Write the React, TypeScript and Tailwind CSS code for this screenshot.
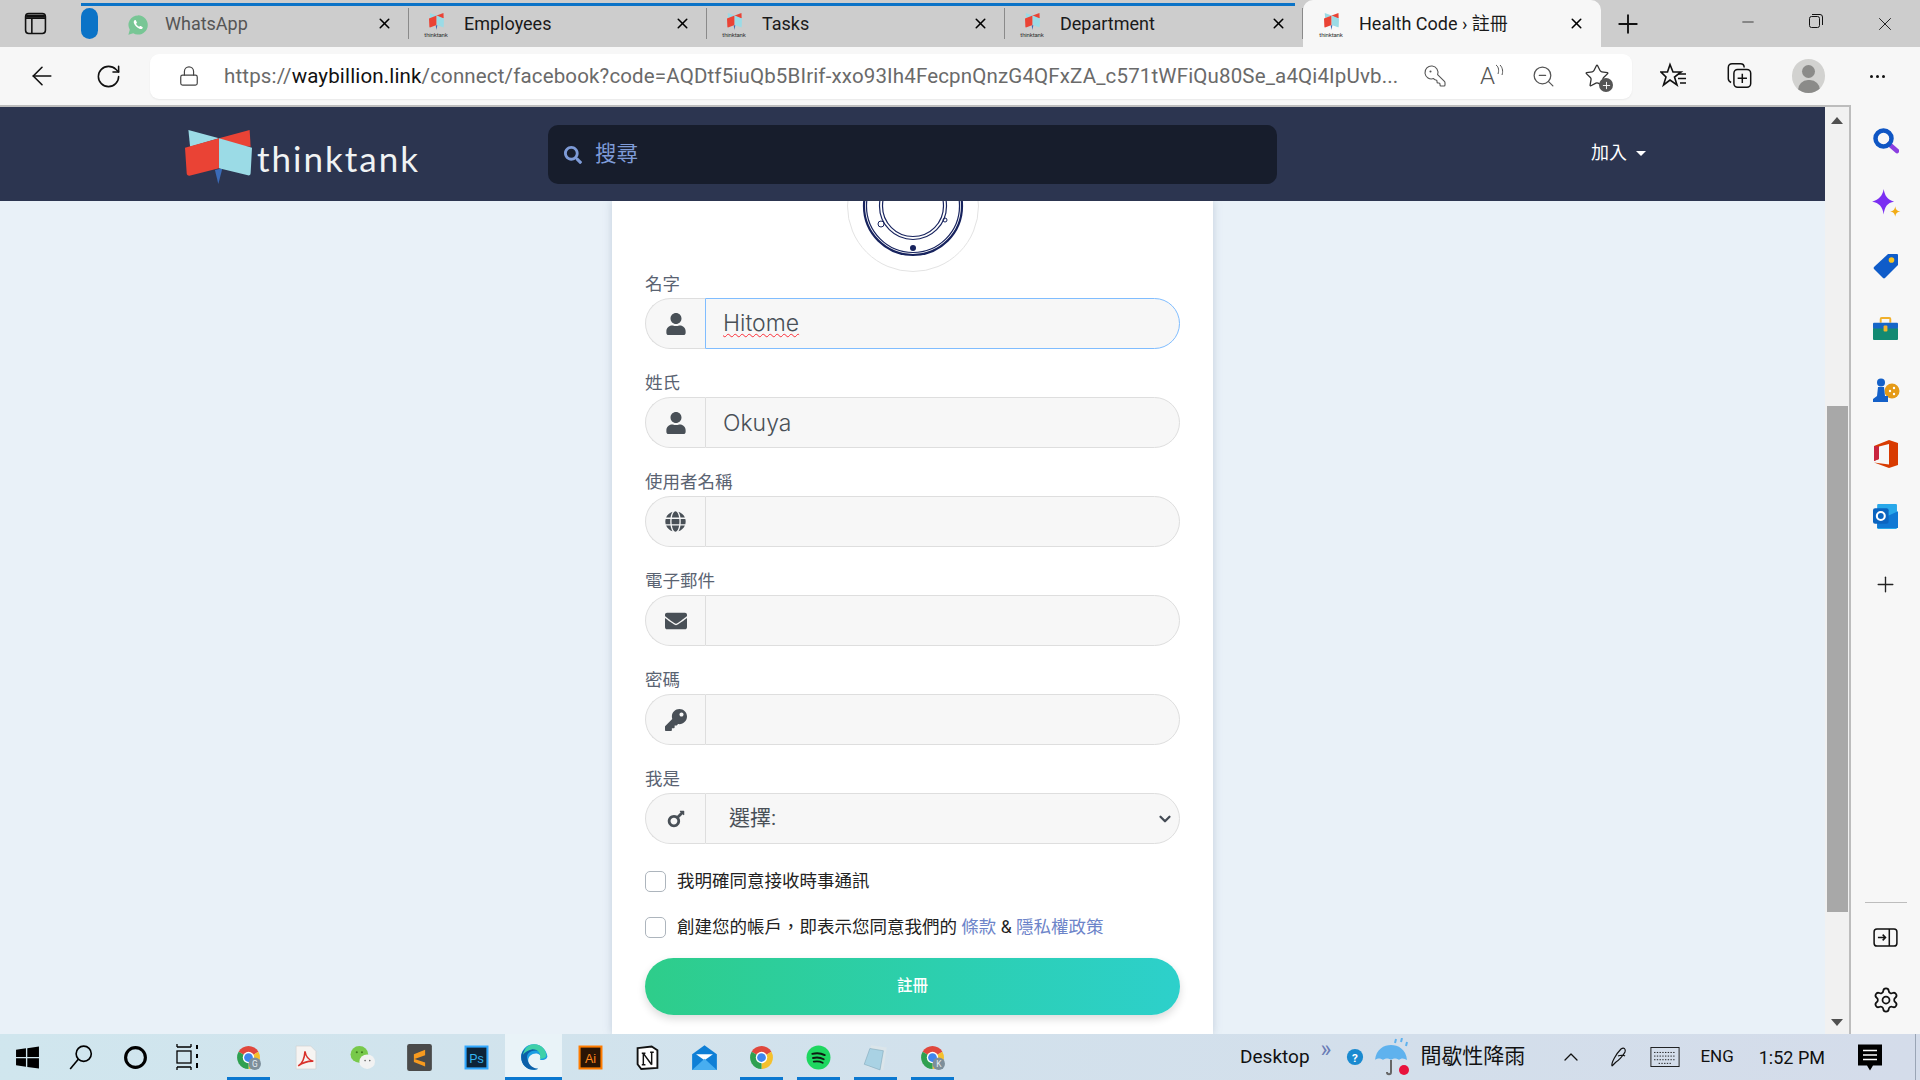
import type { ReactNode } from "react";
import { ArrowLeft, RotateCw, X, Plus, Minus, ChevronDown, ChevronUp, Star, Settings, KeyRound, ZoomOut, Lock } from "lucide-react";
import { FaUser, FaGlobe, FaEnvelope, FaKey, FaMars, FaSearch } from "react-icons/fa";

const LogoMark = ({ className }: { className: string }) => (
  <svg viewBox="45 45 197 162" preserveAspectRatio="none" className={className}>
    <path d="M55 45 L145 70 L60 95 Z" fill="#9bdbe6" />
    <path d="M145 70 L235 45 L238 95 L190 90 Z" fill="#ea4335" />
    <path d="M133 165 L155 160 L143 207 Z" fill="#3a6bb8" />
    <path d="M45 98 L145 70 L145 160 L58 182 Q50 182 50 175 Z" fill="#ea4335" />
    <path d="M145 70 L242 98 L238 175 Q238 183 230 181 L145 160 Z" fill="#9bdbe6" />
  </svg>
);

const Favicon = () => (
  <div className="flex w-[24px] flex-col items-center">
    <LogoMark className="h-[17px] w-[15px]" />
    <span className="mt-[1px] text-[6px] leading-[7px] tracking-tight text-[#333]">thinktank</span>
  </div>
);

const WhatsAppIcon = () => (
  <svg viewBox="0 0 24 24" className="h-[24px] w-[24px]">
    <path d="M12 1.5a10.5 10.5 0 0 0-9 15.8L1.5 22.5l5.4-1.4A10.5 10.5 0 1 0 12 1.5z" fill="#78c695" />
    <path d="M8.3 6.8c-.9.8-1.2 2-.7 3.4 1 2.6 3.4 5 6 6 1.4.5 2.6.2 3.4-.7.4-.5.3-1-.2-1.4l-1.8-1c-.4-.2-.8-.2-1.1.2l-.6.7c-1.500-.6-2.800-1.900-3.500-3.400l.7-.6c.4-.3.4-.7.2-1.100l-1-1.800c-.3-.5-.9-.6-1.400-.3z" fill="#fff" />
  </svg>
);

const Tab = ({ icon, title, active, dim }: { icon: ReactNode; title: string; active?: boolean; dim?: boolean }) => (
  <div className={active ? "flex h-[47px] w-[298px] items-center rounded-t-[10px] bg-[#f7f7f7] pl-[17px]" : "flex h-[47px] w-[298px] items-center pl-[16px]"}>
    <div className="flex w-[22px] justify-center pt-[3px]">{icon}</div>
    <span className={dim ? "ml-[16px] flex-1 text-[18px] text-[#555]" : "ml-[17px] flex-1 text-[18px] text-[#1a1a1a]"}>{title}</span>
    <X size={17} strokeWidth={2.2} className="text-black" />
    <div className="w-[15px]" />
    {active ? <div className="w-px" /> : <div className="h-[31px] w-px bg-[#8a8a8a]" />}
  </div>
);

const Chrome = ({ badge }: { badge?: string }) => (
  <svg viewBox="0 0 24 24" className="h-[25px] w-[25px]">
    <path d="M2.500 6.500A11 11 0 0 1 21.500 6.500L12 12Z" fill="#e0483d" />
    <path d="M21.500 6.500A11 11 0 0 1 12 23L12 12Z" fill="#f5c02c" />
    <path d="M12 23A11 11 0 0 1 2.500 6.500L12 12Z" fill="#2fa050" />
    <circle cx="12" cy="12" r="5.500" fill="#fff" />
    <circle cx="12" cy="12" r="4.200" fill="#3f86ee" />
    {badge && (
      <>
        <circle cx="18" cy="18" r="6" fill="#7d8f9b" />
        <text x="18" y="21" textAnchor="middle" fontSize="8" fill="#e6edf2">{badge}</text>
      </>
    )}
  </svg>
);

const Windows = () => (
  <svg viewBox="0 0 24 24" className="h-[25px] w-[25px]" fill="#000">
    <path d="M1 4.500 10.500 3.200V11.400H1ZM11.800 3 23 1.400V11.400H11.800ZM1 12.700H10.500V20.800L1 19.500ZM11.800 12.700H23V22.600L11.800 21Z" />
  </svg>
);

const SearchGlass = () => (
  <svg viewBox="0 0 24 24" className="h-[26px] w-[26px]" fill="none" stroke="#000" strokeWidth="1.500">
    <circle cx="14.500" cy="9" r="7" />
    <path d="M9.500 14 2 23" />
  </svg>
);

const Cortana = () => (
  <svg viewBox="0 0 24 24" className="h-[25px] w-[25px]" fill="none" stroke="#000" strokeWidth="3">
    <circle cx="12" cy="12" r="9.500" />
  </svg>
);

const TaskView = () => (
  <svg viewBox="0 0 26 26" className="h-[26px] w-[26px]" fill="none" stroke="#000" strokeWidth="1.300">
    <path d="M1 3H15M1 23H15M15 0V3M1 0V3M1 23V26M15 23V26" />
    <rect x="1" y="7" width="14" height="12" />
    <path d="M21 1V5M21 10V14M21 19V24" strokeWidth="2" />
  </svg>
);

const Acrobat = () => (
  <svg viewBox="0 0 24 24" className="h-[25px] w-[25px]">
    <path d="M3 1H17L22 6V23H3Z" fill="#f6f4f2" stroke="#cfcfcf" strokeWidth=".600" />
    <path d="M5 20c3-1.500 6-6.500 6.500-14 .8 5 3.500 8.500 8 9.500-4.500-.2-9.500 1-14.500 4.500z" fill="none" stroke="#d8312b" strokeWidth="1.500" />
  </svg>
);

const WeChat = () => (
  <svg viewBox="0 0 26 26" className="h-[27px] w-[27px]">
    <ellipse cx="10" cy="10" rx="8.500" ry="8" fill="#78c94b" />
    <ellipse cx="17.500" cy="17" rx="7.500" ry="7" fill="#f2f2f2" />
    <circle cx="7.500" cy="8" r="1" fill="#3f7a20" />
    <circle cx="12.500" cy="8" r="1" fill="#3f7a20" />
    <circle cx="15.500" cy="16" r=".8" fill="#666" />
    <circle cx="20" cy="16" r=".8" fill="#666" />
  </svg>
);

const Sublime = () => (
  <svg viewBox="0 0 24 24" className="h-[27px] w-[27px]">
    <rect x="1" y="0" width="22" height="24" rx="2" fill="#4a4a4a" />
    <path d="M17 5 7 9v4l10 3.500V20L7 16v-2.500L17 10Z" fill="#f79a1f" />
  </svg>
);

const BoxIcon = ({ bg, fg, border, label }: { bg: string; fg: string; border: string; label: string }) => (
  <svg viewBox="0 0 24 24" className="h-[25px] w-[25px]">
    <rect x="1.500" y="1.500" width="21" height="21" fill={bg} stroke={border} strokeWidth="2" />
    <text x="12" y="17" textAnchor="middle" fontSize="12" fontFamily="Liberation Sans" fill={fg}>{label}</text>
  </svg>
);

const Edge = () => (
  <svg viewBox="0 0 24 24" className="h-[28px] w-[28px]">
    <path d="M12 1C5 1 1 6.500 1 12c0 6.500 5 11 10.500 11 1.500 0 3-.4 4-1-3.500.7-8.500-1.500-8.500-7 0-3.500 3-6 6.500-6 3 0 4.500 2 4.500 3.500 0 1.200-1 2-1 2s5.500 1 6.500-3C23 6.500 18.500 1 12 1z" fill="#1b9de2" />
    <path d="M1 12c0-5 4-8.500 9-8.500 5.500 0 8 3.500 9 6-1.500-2.500-4-3-5.500-3C8 6.500 4 10 7 16c1.300 3.500 5 6 8.500 6-1 .6-2.500 1-4 1C6 23 1 18.500 1 12z" fill="#0c5fa8" />
    <path d="M12 1c6.500 0 11 5.500 10.500 10-.4 1.700-2.500 2.800-5.500 2.500 1.500-4-1.500-8.500-7-8C7 5.800 4 8 2.500 10 3.500 5 7 1 12 1z" fill="#3fd0a8" />
  </svg>
);

const Notion = () => (
  <svg viewBox="0 0 24 24" className="h-[25px] w-[25px]">
    <path d="M2.500 3 16 1.500 21.500 5V22L6 23 2.500 18.500Z" fill="#fff" stroke="#111" strokeWidth="1.800" />
    <path d="M8 8V19M8 8 16 19M16 7V19M6.500 8H10M14.500 7H18M6.500 19H10" stroke="#111" strokeWidth="1.400" fill="none" />
  </svg>
);

const Mail = () => (
  <svg viewBox="0 0 24 24" className="h-[27px] w-[27px]">
    <path d="M1 9 12 1 23 9V23H1Z" fill="#0f7fd6" />
    <path d="M4.500 9H19.500L12 14.500Z" fill="#fff" />
    <path d="M1 23 12 13 23 23Z" fill="#48aef0" />
  </svg>
);

const Spotify = () => (
  <svg viewBox="0 0 24 24" className="h-[25px] w-[25px]" fill="none">
    <circle cx="12" cy="12" r="11.500" fill="#1ed760" />
    <path d="M6 8.500c4-1 8.500-.7 12 1.200M6.700 12.500c3.500-.8 7.300-.5 10.300 1.200M7.500 16c3-.6 6-.3 8.500 1" stroke="#0d1b12" strokeWidth="1.800" strokeLinecap="round" />
  </svg>
);

const Notepad = () => (
  <svg viewBox="0 0 24 24" className="h-[27px] w-[27px]">
    <path d="M4 20 8 1 22 3 19 23Z" fill="#dbe5ea" />
    <path d="M2 18 7 4 19 6 16 23Z" fill="#a9d2e4" stroke="#7fa5b7" strokeWidth=".500" />
  </svg>
);

const Cell = ({ children, line, active }: { children: ReactNode; line?: boolean; active?: boolean }) => (
  <div className={active ? "relative flex h-full w-[57px] items-center justify-center bg-[#e9f3f8]" : "relative flex h-full w-[57px] items-center justify-center"}>
    {children}
    {active && <div className="absolute inset-x-0 bottom-0 h-[3px] bg-[#0b78d0]" />}
    {line && <div className="absolute bottom-0 left-[7px] h-[3px] w-[43px] bg-[#0b78d0]" />}
  </div>
);

const Taskbar = () => (
  <footer className="flex h-[46px] shrink-0 items-center bg-linear-to-r from-[#d0e6ee] to-[#d4dcea]">
    <div className="flex h-full w-[54px] items-center justify-center"><Windows /></div>
    <div className="flex h-full w-[54px] items-center justify-center"><SearchGlass /></div>
    <div className="flex h-full w-[54px] items-center justify-center"><Cortana /></div>
    <div className="flex h-full w-[54px] items-center justify-center"><TaskView /></div>
    <div className="ml-[4px] flex h-full">
      <Cell line><Chrome badge="G" /></Cell>
      <Cell><Acrobat /></Cell>
      <Cell><WeChat /></Cell>
      <Cell><Sublime /></Cell>
      <Cell><BoxIcon bg="#0d2438" fg="#35b4f0" border="#31a8ff" label="Ps" /></Cell>
      <Cell active><Edge /></Cell>
      <Cell><BoxIcon bg="#2a1505" fg="#ff8a1f" border="#ff7c00" label="Ai" /></Cell>
      <Cell><Notion /></Cell>
      <Cell><Mail /></Cell>
      <Cell line><Chrome /></Cell>
      <Cell line><Spotify /></Cell>
      <Cell line><Notepad /></Cell>
      <Cell line><Chrome badge="K" /></Cell>
    </div>
    <div className="ml-auto flex h-full items-center text-[18px] text-[#111]">
      <span className="text-[19px]">Desktop</span>
      <span className="mb-[16px] ml-[11px] text-[23px] leading-none text-[#6a7cb5]">»</span>
      <svg viewBox="0 0 20 20" className="ml-[15px] h-[18px] w-[18px]">
        <circle cx="10" cy="10" r="9" fill="#1a8ad0" />
        <text x="10" y="15" textAnchor="middle" fontSize="13" fontWeight="700" fill="#fff">?</text>
      </svg>
      <svg viewBox="0 0 36 38" className="ml-[11px] h-[38px] w-[36px]">
        <path d="M0 22C1 11 9 7 16 7s15 4 16 15c-3-2-6-2-8 0-2-2-6-2-8 0-2-2-6-2-8 0-2-2-6-2-8 0z" fill="#5fb2ee" />
        <path d="M16 22V34c0 3-4 3-4 0" fill="none" stroke="#666" strokeWidth="2" />
        <path d="M21 1l-1 4M27 0l-1 4M32 4l-1 4" stroke="#5fb2ee" strokeWidth="2" />
        <circle cx="29" cy="32" r="5" fill="#e8123c" />
      </svg>
      <span className="ml-[9px] text-[21px]">間歇性降雨</span>
      <ChevronUp size={24} strokeWidth={1.3} className="ml-[34px]" />
      <svg viewBox="0 0 20 22" className="ml-[26px] h-[22px] w-[20px]" fill="none" stroke="#111" strokeWidth="1.200">
        <path d="M3 20C2 17 7 8 12 3c3-2 5 0 4 3-2 4-7 9-9 10M3 20l4-4M9 10c2-1 6-1 7 0" />
      </svg>
      <svg viewBox="0 0 32 22" className="ml-[20px] h-[20px] w-[32px]" fill="none" stroke="#111" strokeWidth="1">
        <rect x=".500" y=".500" width="31" height="21" />
        <path d="M4 6H28M4 10H28M4 14H28M9 18H23" strokeDasharray="1.500 1.500" />
      </svg>
      <span className="ml-[19px] text-[17px]">ENG</span>
      <span className="ml-[25px] text-[18px]">1:52 PM</span>
      <svg viewBox="0 0 24 26" className="ml-[33px] h-[27px] w-[24px]">
        <path d="M0 0H24V21H15L12 26 9 21H0Z" fill="#000" />
        <path d="M5 6H19M5 10.500H19M5 15H19" stroke="#fff" strokeWidth="1.300" />
      </svg>
      <div className="ml-[33px] h-full w-px bg-[#9aa5b5]" />
      <div className="w-[4px]" />
    </div>
  </footer>
);

const Field = ({ label, icon, children }: { label: string; icon: ReactNode; children: ReactNode }) => (
  <div className="flex h-[99px] flex-col">
    <label className="h-[32px] text-[17.5px] leading-[37px] text-[#5a6372]">{label}</label>
    {/* the input group: round cap with the icon, then the control */}
    <div className="flex h-[51px]">
      <div className="flex w-[60px] items-center justify-center rounded-l-full border-y border-l border-[#dedede] bg-[#f7f7f7] text-[#495057]">{icon}</div>
      {children}
    </div>
  </div>
);

const inputClass =
  "h-full min-w-0 flex-1 rounded-r-full border border-[#dedede] bg-[#f7f7f7] pl-[17px] font-['Inter'] text-[23px] font-light text-[#495057] outline-none";

const Seal = () => (
  <svg viewBox="0 0 132 132" className="h-[132px] w-[132px]" fill="none">
    <circle cx="66" cy="66" r="65.500" fill="#fff" stroke="#e3e3e3" />
    <circle cx="66" cy="66" r="49" stroke="#17235e" strokeWidth="2.200" />
    <circle cx="66" cy="66" r="46.500" stroke="#17235e" strokeWidth="1.200" />
    <circle cx="66" cy="66" r="33.500" stroke="#17235e" strokeWidth="1.200" />
    <circle cx="66" cy="66" r="30.500" stroke="#17235e" strokeWidth="1.200" />
    <circle cx="66" cy="108" r="3" fill="#17235e" />
    <circle cx="34" cy="84" r="3" stroke="#17235e" />
    <circle cx="98" cy="80" r="2" stroke="#17235e" />
  </svg>
);

const Form = () => (
  <div className="mx-auto flex h-[833px] w-[601px] flex-col bg-white px-[33px] shadow-[0_0_8px_rgba(120,140,165,0.35)]">
    <div className="-mt-[61px] flex justify-center"><Seal /></div>
    <div className="mt-[-6px]">
      <Field label="名字" icon={<FaUser size={22} />}>
        <div className="flex h-full min-w-0 flex-1 items-center rounded-r-full border border-[#80bdff] bg-[#f7f7f7] pl-[17px] font-['Inter'] text-[23px] font-light text-[#495057]">
          <span className="underline decoration-red-500 decoration-wavy decoration-1 underline-offset-2">Hitome</span>
        </div>
      </Field>
      <Field label="姓氏" icon={<FaUser size={22} />}>
        <input className={inputClass} defaultValue="Okuya" />
      </Field>
      <Field label="使用者名稱" icon={<FaGlobe size={21} />}>
        <input className={inputClass} />
      </Field>
      <Field label="電子郵件" icon={<FaEnvelope size={22} />}>
        <input className={inputClass} />
      </Field>
      <Field label="密碼" icon={<FaKey size={22} />}>
        <input className={inputClass} />
      </Field>
      <Field label="我是" icon={<FaMars size={22} />}>
        <div className="relative h-full min-w-0 flex-1">
          <select className="h-full w-full appearance-none rounded-r-full border border-[#dedede] bg-[#f7f7f7] pl-[23px] text-[21px] text-[#495057] outline-none">
            <option>選擇:</option>
          </select>
          <ChevronDown size={18} strokeWidth={3} className="absolute top-[17px] right-[6px] text-[#444b55]" />
        </div>
      </Field>
    </div>
    <div className="mt-[9px] flex h-[25px] items-center">
      <input type="checkbox" className="h-[21px] w-[21px] appearance-none rounded-[5px] border border-[#adb5bd] bg-white" />
      <span className="ml-[11px] text-[17.5px] text-[#222]">我明確同意接收時事通訊</span>
    </div>
    <div className="mt-[21px] flex h-[25px] items-center">
      <input type="checkbox" className="h-[21px] w-[21px] appearance-none rounded-[5px] border border-[#adb5bd] bg-white" />
      <span className="ml-[11px] text-[17.5px] text-[#222]">
        創建您的帳戶{"\uFF0C"}即表示您同意我們的 <a className="text-[#6d84c9]">條款</a> &amp; <a className="text-[#6d84c9]">隱私權政策</a>
      </span>
    </div>
    <button className="mt-[18px] h-[57px] w-full rounded-full bg-linear-to-r from-[#2ecd8a] to-[#2dd0cb] text-[15.500px] font-medium text-white shadow-[0_4px_8px_rgba(0,0,0,0.14)]">
      註冊
    </button>
  </div>
);

const SideIcon = ({ children }: { children: ReactNode }) => (
  <div className="flex h-[62.500px] w-full items-center justify-center">{children}</div>
);

const Sidebar = () => (
  <aside className="flex w-[69px] shrink-0 flex-col bg-[#f7f7f7] pt-[5px]">
    <SideIcon>
      <svg viewBox="0 0 26 26" className="h-[26px] w-[26px]" fill="none">
        <path d="M16 16 24 23" stroke="#8b3fe0" strokeWidth="4.500" strokeLinecap="round" />
        <circle cx="10.500" cy="10.500" r="8" stroke="#0f56c4" strokeWidth="4.500" />
      </svg>
    </SideIcon>
    <SideIcon>
      <svg viewBox="0 0 26 26" className="h-[30px] w-[30px]">
        <path d="M11 0c1 6 3 9 9 11-6 1-8 4-9 11-1-7-4-10-10-11 6-2 9-5 10-11z" fill="#7b2ff2" />
        <path d="M21 15c.5 3 1.500 4 4.500 4.500-3 .5-4 1.500-4.500 4.500-.5-3-1.500-4-4.500-4.500 3-.5 4-1.500 4.500-4.500z" fill="#f2ac14" />
      </svg>
    </SideIcon>
    <SideIcon>
      <svg viewBox="0 0 26 26" className="h-[26px] w-[26px]">
        <path d="M15 1H24a1 1 0 0 1 1 1V12L12 25a1.500 1.500 0 0 1-2 0L1 16a1.500 1.500 0 0 1 0-2Z" fill="#0f5cc9" />
        <circle cx="18.500" cy="7" r="2.800" fill="#f9c320" />
      </svg>
    </SideIcon>
    <SideIcon>
      <svg viewBox="0 0 28 26" className="h-[25px] w-[27px]" fill="none">
        <path d="M9 7V3a1 1 0 0 1 1-1h8a1 1 0 0 1 1 1v4" stroke="#f0b02c" strokeWidth="2" />
        <rect x="1" y="12" width="26" height="13" rx="1" fill="#128a72" />
        <rect x="1" y="7" width="26" height="6" rx="1" fill="#1566c8" />
        <rect x="12" y="10" width="4" height="6" rx="1" fill="#f5b52a" />
      </svg>
    </SideIcon>
    <SideIcon>
      <svg viewBox="0 0 28 26" className="h-[26px] w-[28px]">
        <circle cx="20" cy="13" r="7.500" fill="#e59a17" />
        <circle cx="18" cy="13" r="1.200" fill="#fff" />
        <circle cx="22" cy="10" r="1.200" fill="#fff" />
        <circle cx="22" cy="16" r="1.200" fill="#fff" />
        <circle cx="9" cy="4.500" r="4" fill="#1460c8" />
        <path d="M6 9h6l1 9h3v6H1v-3l4-3Z" fill="#1460c8" />
      </svg>
    </SideIcon>
    <SideIcon>
      <svg viewBox="0 0 24 28" className="h-[28px] w-[24px]">
        <path d="M15 0 24 3V25L15 28 0 22.500 15 24.500V4L5 6.500V19L0 21V6Z" fill="#d83b01" />
        <path d="M0 6 5 6.500V19L0 21Z" fill="#c9253f" />
      </svg>
    </SideIcon>
    <SideIcon>
      <svg viewBox="0 0 24 24" className="h-[25px] w-[25px]">
        <rect x="4" y="0" width="19" height="24" rx="1" fill="#28a8ea" />
        <path d="M13 12 24 7V23H4V18Z" fill="#0f78d4" />
        <rect x="0" y="4" width="15" height="15" rx="2" fill="#0a64c0" />
        <circle cx="7.500" cy="11.500" r="3.800" fill="none" stroke="#fff" strokeWidth="2" />
      </svg>
    </SideIcon>
    <div className="flex h-[67px] w-full items-center justify-center pt-[6px]">
      <Plus size={25} strokeWidth={1.300} className="text-[#222]" />
    </div>
    <div className="mt-auto flex flex-col items-center">
      <div className="h-px w-[42px] bg-[#bdbdbd]" />
      <div className="flex h-[69px] items-center justify-center">
        <svg viewBox="0 0 26 20" className="h-[19px] w-[25px]" fill="none" stroke="#111" strokeWidth="1.600">
          <rect x="1" y="1" width="24" height="18" rx="3" />
          <path d="M17 1V19M5 10H13M10 7l3 3-3 3" />
        </svg>
      </div>
      <div className="flex h-[62px] items-start justify-center pt-[14px]">
        <Settings size={28} strokeWidth={1.500} className="text-[#111]" />
      </div>
    </div>
  </aside>
);

const ScrollBar = () => (
  <div className="flex w-[26px] shrink-0 flex-col items-center border-r-2 border-[#bdbdbd] bg-[#f1f1f1]">
    <div className="mt-[10px] h-0 w-0 border-x-[6px] border-b-[7px] border-x-transparent border-b-[#505050]" />
    <div className="mt-[282px] h-[506px] w-[21px] bg-[#a8a8a8]" />
    <div className="mt-auto mb-[8px] h-0 w-0 border-x-[6px] border-t-[7px] border-x-transparent border-t-[#505050]" />
  </div>
);

export default function App() {
  return (
    <div className="flex h-screen w-screen flex-col overflow-hidden bg-[#f7f7f7] font-[family-name:'Roboto','Noto_Sans_CJK_TC',sans-serif]">
      {/* tab strip */}
      <div className="relative flex h-[47px] shrink-0 items-center bg-[#cdcdcd]">
        <div className="absolute top-[3px] left-[81px] h-[3px] w-[1214px] bg-[#0b73c7]" />
        <div className="flex w-[70px] justify-center">
          <svg viewBox="0 0 22 22" className="h-[23px] w-[23px]" fill="none" stroke="#111" strokeWidth="1.500">
            <rect x="1.500" y="1.500" width="19" height="19" rx="3" />
            <path d="M7.500 6V20.500M1.500 6H20.500" />
            <path d="M2 2.500H20V5.500H2Z" fill="#111" stroke="none" />
          </svg>
        </div>
        <div className="ml-[11px] h-[31px] w-[17px] rounded-full bg-[#0b73c7]" />
        <div className="ml-[13px] flex">
          <Tab icon={<WhatsAppIcon />} title="WhatsApp" dim />
          <Tab icon={<Favicon />} title="Employees" />
          <Tab icon={<Favicon />} title="Tasks" />
          <Tab icon={<Favicon />} title="Department" />
          <Tab icon={<Favicon />} title="Health Code › 註冊" active />
        </div>
        <Plus size={30} strokeWidth={1.500} className="ml-[12px] text-[#111]" />
        <div className="ml-auto flex">
          <div className="flex w-[68px] justify-center"><Minus size={18} strokeWidth={1} className="text-[#111]" /></div>
          <div className="flex w-[68px] justify-center">
            <svg viewBox="0 0 16 16" className="h-[16px] w-[16px]" fill="none" stroke="#111" strokeWidth="1">
              <rect x="1.500" y="3.500" width="10" height="11" rx="2" />
              <path d="M4 1.500H12a2.500 2.500 0 0 1 2.500 2.500V12" />
            </svg>
          </div>
          <div className="flex w-[70px] justify-center"><X size={22} strokeWidth={1} className="text-[#111]" /></div>
        </div>
      </div>

      {/* address bar */}
      <div className="flex h-[58px] shrink-0 items-center bg-[#f7f7f7]">
        <ArrowLeft size={30} strokeWidth={1.300} className="ml-[27px] text-[#111]" />
        <RotateCw size={27} strokeWidth={1.400} className="ml-[38px] text-[#111]" />
        <div className="ml-[28px] flex h-[45px] w-[1482px] items-center rounded-[9px] bg-white shadow-[0_1px_2px_rgba(0,0,0,0.06)]">
          <Lock size={22} strokeWidth={1.300} className="ml-[28px] text-[#444]" />
          <div className="ml-[24px] w-[1176px] overflow-hidden text-[20.500px] tracking-[0.15px] whitespace-nowrap text-[#6a6a6a]">
            https://<span className="text-[#111]">waybillion.link</span>/connect/facebook?code=AQDtf5iuQb5BIrif-xxo93Ih4FecpnQnzG4QFxZA_c571tWFiQu80Se_a4Qi4IpUvb...
          </div>
          <KeyRound size={24} strokeWidth={1.100} className="ml-[23px] -scale-x-100 text-[#555]" />
          <div className="ml-[33px] flex w-[30px] items-start text-[#555]">
            <span className="text-[24px] leading-none font-light">A</span>
            <svg viewBox="0 0 10 14" className="h-[14px] w-[10px]" fill="none" stroke="#555" strokeWidth="1">
              <path d="M1 1c3 2 3 6 2 9M5 1c3 3 3 7 2 10" />
            </svg>
          </div>
          <ZoomOut size={25} strokeWidth={1.200} className="ml-[21px] text-[#555]" />
          <div className="relative ml-[28px]">
            <Star size={26} strokeWidth={1.200} className="text-[#333]" />
            <div className="absolute -right-[3px] -bottom-[3px] flex h-[14px] w-[14px] items-center justify-center rounded-full bg-[#555]">
              <Plus size={11} strokeWidth={2} className="text-white" />
            </div>
          </div>
        </div>
        <svg viewBox="0 0 28 28" className="ml-[28px] h-[28px] w-[28px]" fill="none" stroke="#111" strokeWidth="1.600">
          <path d="M10 2.500 13 10H21L14.500 15 17 23 10 18 3.500 23 6 15 1 10H7.500Z" />
          <path d="M18 12H26M18 16.500H26M20 21H26" />
        </svg>
        <svg viewBox="0 0 28 30" className="ml-[38px] h-[28px] w-[27px]" fill="none" stroke="#111" strokeWidth="1.600">
          <path d="M5 22C3 21 2 20 2 18L2 6C2 3 4 2 6 2H15C18 2 19 4 19 6" />
          <rect x="8" y="8" width="18" height="19" rx="4" />
          <path d="M17 12.500V22.500M12 17.500H22" />
        </svg>
        <div className="relative ml-[39px] flex h-[34px] w-[33px] items-center justify-center overflow-hidden rounded-full bg-[#d2d2d0]">
          <div className="absolute top-[6px] h-[13px] w-[13px] rounded-full bg-[#8b8b89]" />
          <div className="absolute top-[21px] h-[20px] w-[22px] rounded-full bg-[#8b8b89]" />
        </div>
        <div className="ml-[45px] flex gap-[3px]">
          <div className="h-[3px] w-[3px] rounded-full bg-[#111]" />
          <div className="h-[3px] w-[3px] rounded-full bg-[#111]" />
          <div className="h-[3px] w-[3px] rounded-full bg-[#111]" />
        </div>
      </div>

      {/* page + sidebar */}
      <div className="flex min-h-0 flex-1">
        <div className="flex min-w-0 flex-1 border-t-2 border-[#bdbdbd]">
          <div className="flex min-w-0 flex-1 flex-col">
            <nav className="relative z-10 flex h-[94px] shrink-0 bg-[#2c3550]">
              <div className="ml-[185px] flex h-full w-[363px] pt-[23px]">
                <LogoMark className="h-[54px] w-[67px]" />
                <span className="mt-[8px] ml-[5px] font-['Lato'] text-[35px] leading-[40px] tracking-[2px] text-[#f0f3f4]">thinktank</span>
              </div>
              <div className="mt-[18px] flex h-[59px] w-[729px] items-center rounded-[10px] bg-[#171d2c] text-[21.500px] text-[#7e9bd8]">
                <FaSearch size={18} className="ml-[16px]" />
                <span className="ml-[13px]">搜尋</span>
              </div>
              <div className="ml-[314px] mt-[31px] flex h-[28px] items-center text-[18px] text-white">
                加入
                <div className="mt-[2px] ml-[9px] h-0 w-0 border-x-[5px] border-t-[5px] border-x-transparent border-t-white" />
              </div>
            </nav>
            <main className="min-h-0 flex-1 overflow-hidden bg-[#e9f1f8]">
              <Form />
            </main>
          </div>
          <ScrollBar />
        </div>
        <Sidebar />
      </div>

      <Taskbar />
    </div>
  );
}
